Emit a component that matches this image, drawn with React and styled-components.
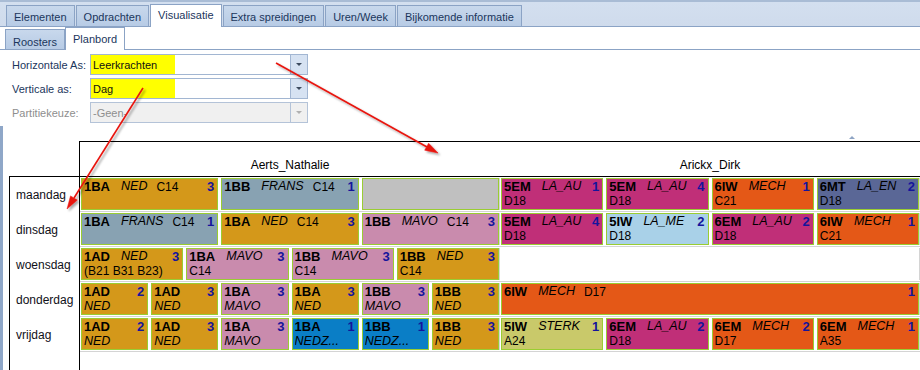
import styled, { createGlobalStyle } from "styled-components";

const GlobalStyle = createGlobalStyle`
  html, body {
    margin: 0;
    padding: 0;
    background: #ffffff;
  }
  * {
    box-sizing: border-box;
  }
`;

const Page = styled.div`
  position: relative;
  width: 920px;
  height: 370px;
  overflow: hidden;
  background: #ffffff;
  font-family: "Liberation Sans", Arial, sans-serif;
  color: #000;
`;

const TabStrip = styled.div`
  display: flex;
  align-items: flex-end;
  height: 27px;
  padding-left: 6px;
  background: linear-gradient(#a9bcd5 0, #a9bcd5 2px, #d3dfef 2px, #cfdbec 100%);
  border-bottom: 1px solid #8ba3c5;
`;

const Tab = styled.div`
  position: relative;
  height: ${(p) => (p.$active ? "23px" : "21px")};
  margin-right: 1px;
  margin-bottom: ${(p) => (p.$active ? "-1px" : "0")};
  padding: ${(p) => (p.$active ? "4px 7px 0" : "5px 7px 0")};
  border: 1px solid #8ba3c5;
  border-bottom: ${(p) => (p.$active ? "none" : "0")};
  background: ${(p) =>
    p.$active ? "#ffffff" : "linear-gradient(#c8d8ec, #b7cbe5)"};
  font-size: 11px;
  line-height: 13px;
  color: #1b365c;
  white-space: nowrap;
`;

const SubStrip = styled.div`
  display: flex;
  align-items: flex-end;
  height: 23px;
  padding-left: 5px;
  background: #ffffff;
  border-bottom: 1px solid #8ba3c5;
`;

const SubTab = styled(Tab)`
  height: ${(p) => (p.$active ? "23px" : "20px")};
  padding: ${(p) => (p.$active ? "5px 7px 0" : "6px 7px 0")};
  margin-right: 0;
`;

const Form = styled.div`
  padding: 4px 0 0 12px;
`;

const FormRow = styled.div`
  display: flex;
  align-items: center;
  height: 21px;
  margin-bottom: 3px;
`;

const Label = styled.div`
  width: 78px;
  font-size: 11px;
  color: ${(p) => (p.$disabled ? "#8e8e8e" : "#1b365c")};
`;

const Combo = styled.div`
  display: flex;
  width: 218px;
  height: 21px;
  border: 1px solid ${(p) => (p.$disabled ? "#b4c3d8" : "#a2b6d2")};
  background: ${(p) => (p.$disabled ? "#f0f0f0" : "#ffffff")};
`;

const ComboValue = styled.div`
  flex: 1;
  display: flex;
  align-items: stretch;
`;

const Highlight = styled.span`
  display: flex;
  align-items: center;
  width: ${(p) => (p.$mark ? "84px" : "auto")};
  padding-left: 2px;
  background: ${(p) => (p.$mark ? "#ffff00" : "transparent")};
  font-size: 11px;
  color: ${(p) => (p.$disabled ? "#8e8e8e" : "#111")};
`;

const DropButton = styled.div`
  width: 17px;
  display: flex;
  align-items: center;
  justify-content: center;
  border-left: 1px solid ${(p) => (p.$disabled ? "#b4c3d8" : "#a2b6d2")};
  background: ${(p) => (p.$disabled ? "#f0f0f0" : "#d6e2f2")};

  &::after {
    content: "";
    border-left: 3px solid transparent;
    border-right: 3px solid transparent;
    border-top: 3px solid ${(p) => (p.$disabled ? "#b0b0b0" : "#3c4a5e")};
  }
`;

const Planner = styled.div`
  border-left: 3px solid #8fa7c8;
`;

const Splitter = styled.div`
  height: 15px;
  padding: 10px 0 0 846px;

  &::after {
    content: "";
    display: block;
    width: 0;
    border-left: 3px solid transparent;
    border-right: 3px solid transparent;
    border-bottom: 3px solid #8ea4c4;
  }
`;

const Header = styled.div`
  display: flex;
  margin-left: 76px;
  height: 35px;
  border-top: 1px solid #000;
  border-left: 1px solid #000;
`;

const HeaderName = styled.div`
  width: ${(p) => p.$w}px;
  padding-top: 16px;
  text-align: center;
  font-size: 12px;
  line-height: 14px;
`;

const Body = styled.div`
  display: flex;
  margin-left: 6px;
  border-top: 1px solid #000;
`;

const DayBox = styled.div`
  width: 71px;
  height: 195px;
  border: 1px solid #000;
  border-top: none;
`;

const DayLabel = styled.div`
  display: flex;
  align-items: center;
  height: 35px;
  padding-left: 6px;
  font-size: 12px;
  color: #101018;
`;

const Grid = styled.div`
  width: 840px;
`;

const Row = styled.div`
  display: flex;
  height: 35px;
  padding: 1px 0;
  border-bottom: 1px solid #d4d4d4;
`;

const Slot = styled.div`
  display: flex;
  gap: 3px;
  width: 420px;
  padding-left: 1px;
  border-right: 1px solid #d4d4d4;
`;

const Cell = styled.div`
  flex: 1 1 0;
  min-width: 0;
  height: 32px;
  padding: 0 3px 0 2px;
  border: 1px solid #9acd32;
  background: ${(p) => p.$bg};
  overflow: hidden;
  white-space: nowrap;
`;

const LineTop = styled.div`
  display: flex;
  align-items: baseline;
  height: 15px;
  line-height: 15px;
`;

const Code = styled.span`
  font-size: 13px;
  font-weight: 700;
`;

const Subject = styled.span`
  display: inline-block;
  margin-left: 11px;
  font-size: 12.5px;
  font-style: italic;
  transform: translateY(-1px);
`;

const Room = styled.span`
  margin-left: 9px;
  font-size: 12px;
`;

const Count = styled.span`
  margin-left: auto;
  font-size: 13px;
  font-weight: 700;
  color: #14149c;
`;

const LineBottom = styled.div`
  margin-top: 1px;
  height: 13px;
  line-height: 13px;
  font-size: ${(p) => (p.$italic ? "12.5px" : "12px")};
  font-style: ${(p) => (p.$italic ? "italic" : "normal")};
  overflow: hidden;
`;

const Arrows = styled.svg`
  position: absolute;
  left: 0;
  top: 0;
  pointer-events: none;
`;

const GOLD = "#d4981a";
const SLATE = "#88a2b2";
const GREY = "#c0c0c0";
const PINK = "#c98bad";
const MAGENTA = "#c02f78";
const ORANGE = "#e45817";
const NAVY = "#5a6796";
const SKY = "#a9d1e8";
const BLUE = "#0a7ec6";
const OLIVE = "#c9c96a";

const rows = [
  {
    day: "maandag",
    a: [
      { kind: "inline", code: "1BA", subj: "NED", room: "C14", n: 3, bg: GOLD },
      { kind: "inline", code: "1BB", subj: "FRANS", room: "C14", n: 1, bg: SLATE },
      { kind: "empty", bg: GREY },
    ],
    b: [
      { kind: "stack", code: "5EM", subj: "LA_AU", room: "D18", n: 1, bg: MAGENTA },
      { kind: "stack", code: "5EM", subj: "LA_AU", room: "D18", n: 4, bg: MAGENTA },
      { kind: "stack", code: "6IW", subj: "MECH", room: "C21", n: 1, bg: ORANGE },
      { kind: "stack", code: "6MT", subj: "LA_EN", room: "D18", n: 2, bg: NAVY },
    ],
  },
  {
    day: "dinsdag",
    a: [
      { kind: "inline", code: "1BA", subj: "FRANS", room: "C14", n: 1, bg: SLATE },
      { kind: "inline", code: "1BA", subj: "NED", room: "C14", n: 3, bg: GOLD },
      { kind: "inline", code: "1BB", subj: "MAVO", room: "C14", n: 3, bg: PINK },
    ],
    b: [
      { kind: "stack", code: "5EM", subj: "LA_AU", room: "D18", n: 4, bg: MAGENTA },
      { kind: "stack", code: "5IW", subj: "LA_ME", room: "D18", n: 2, bg: SKY },
      { kind: "stack", code: "6EM", subj: "LA_AU", room: "D18", n: 2, bg: MAGENTA },
      { kind: "stack", code: "6IW", subj: "MECH", room: "C21", n: 1, bg: ORANGE },
    ],
  },
  {
    day: "woensdag",
    a: [
      { kind: "stack", code: "1AD", subj: "NED", room: "(B21 B31 B23)", n: 3, bg: GOLD },
      { kind: "stack", code: "1BA", subj: "MAVO", room: "C14", n: 3, bg: PINK },
      { kind: "stack", code: "1BB", subj: "MAVO", room: "C14", n: 3, bg: PINK },
      { kind: "stack", code: "1BB", subj: "NED", room: "C14", n: 3, bg: GOLD },
    ],
    b: [],
  },
  {
    day: "donderdag",
    a: [
      { kind: "small", code: "1AD", subj: "NED", n: 2, bg: GOLD },
      { kind: "small", code: "1AD", subj: "NED", n: 3, bg: GOLD },
      { kind: "small", code: "1BA", subj: "MAVO", n: 3, bg: PINK },
      { kind: "small", code: "1BA", subj: "NED", n: 3, bg: GOLD },
      { kind: "small", code: "1BB", subj: "MAVO", n: 3, bg: PINK },
      { kind: "small", code: "1BB", subj: "NED", n: 3, bg: GOLD },
    ],
    b: [{ kind: "inline", code: "6IW", subj: "MECH", room: "D17", n: 1, bg: ORANGE }],
  },
  {
    day: "vrijdag",
    a: [
      { kind: "small", code: "1AD", subj: "NED", n: 2, bg: GOLD },
      { kind: "small", code: "1AD", subj: "NED", n: 3, bg: GOLD },
      { kind: "small", code: "1BA", subj: "MAVO", n: 3, bg: PINK },
      { kind: "small", code: "1BA", subj: "NEDZ...", n: 1, bg: BLUE },
      { kind: "small", code: "1BB", subj: "NEDZ...", n: 1, bg: BLUE },
      { kind: "small", code: "1BB", subj: "NED", n: 3, bg: GOLD },
    ],
    b: [
      { kind: "stack", code: "5IW", subj: "STERK", room: "A24", n: 1, bg: OLIVE },
      { kind: "stack", code: "6EM", subj: "LA_AU", room: "D18", n: 2, bg: MAGENTA },
      { kind: "stack", code: "6EM", subj: "MECH", room: "D17", n: 2, bg: ORANGE },
      { kind: "stack", code: "6EM", subj: "MECH", room: "A35", n: 1, bg: ORANGE },
    ],
  },
];

const Lesson = ({ item }) => {
  if (item.kind === "empty") return <Cell $bg={item.bg} />;
  return (
    <Cell $bg={item.bg}>
      <LineTop>
        <Code>{item.code}</Code>
        {item.kind !== "small" && <Subject>{item.subj}</Subject>}
        {item.kind === "inline" && <Room>{item.room}</Room>}
        <Count>{item.n}</Count>
      </LineTop>
      {item.kind === "stack" && <LineBottom>{item.room}</LineBottom>}
      {item.kind === "small" && <LineBottom $italic>{item.subj}</LineBottom>}
    </Cell>
  );
};

const Selector = ({ label, value, mark, disabled }) => (
  <FormRow>
    <Label $disabled={disabled}>{label}</Label>
    <Combo $disabled={disabled}>
      <ComboValue>
        <Highlight $mark={mark} $disabled={disabled}>
          {value}
        </Highlight>
      </ComboValue>
      <DropButton $disabled={disabled} />
    </Combo>
  </FormRow>
);

const App = () => {
  return (
    <Page>
      <GlobalStyle />
      <TabStrip>
        <Tab>Elementen</Tab>
        <Tab>Opdrachten</Tab>
        <Tab $active>Visualisatie</Tab>
        <Tab>Extra spreidingen</Tab>
        <Tab>Uren/Week</Tab>
        <Tab>Bijkomende informatie</Tab>
      </TabStrip>
      <SubStrip>
        <SubTab>Roosters</SubTab>
        <SubTab $active>Planbord</SubTab>
      </SubStrip>

      <Form>
        <Selector label="Horizontale As:" value="Leerkrachten" mark />
        <Selector label="Verticale as:" value="Dag" mark />
        <Selector label="Partitiekeuze:" value="-Geen-" disabled />
      </Form>

      <Planner>
        <Splitter />
        <Header>
          <HeaderName $w={420}>Aerts_Nathalie</HeaderName>
          <HeaderName $w={420}>Arickx_Dirk</HeaderName>
        </Header>
        <Body>
          <DayBox>
            {rows.map((r) => (
              <DayLabel key={r.day}>{r.day}</DayLabel>
            ))}
          </DayBox>
          <Grid>
            {rows.map((r) => (
              <Row key={r.day}>
                <Slot>
                  {r.a.map((item, i) => (
                    <Lesson key={i} item={item} />
                  ))}
                </Slot>
                <Slot>
                  {r.b.map((item, i) => (
                    <Lesson key={i} item={item} />
                  ))}
                </Slot>
              </Row>
            ))}
          </Grid>
        </Body>
      </Planner>

      <Arrows width="920" height="370" viewBox="0 0 920 370">
        <defs>
          <filter id="arrowShadow" x="-20%" y="-20%" width="140%" height="140%">
            <feDropShadow dx="2" dy="2" stdDeviation="1.2" floodColor="#000" floodOpacity="0.35" />
          </filter>
        </defs>
        <g filter="url(#arrowShadow)" fill="#e8140e" stroke="#e8140e">
          <line x1="276" y1="63" x2="427" y2="147" strokeWidth="1.6" />
          <polygon points="438,153 424.7,150.2 428.6,143.2" strokeWidth="0.5" />
          <line x1="143" y1="88" x2="74" y2="198" strokeWidth="1.6" />
          <polygon points="67,209 70.5,195.9 77.3,200.1" strokeWidth="0.5" />
        </g>
      </Arrows>
    </Page>
  );
};

export default App;
